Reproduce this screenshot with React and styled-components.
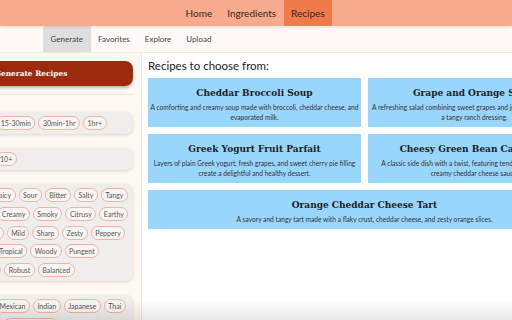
import React from "react";
import styled, { createGlobalStyle } from "styled-components";

const GlobalStyle = createGlobalStyle`
  *, *::before, *::after { box-sizing: border-box; }
  html, body { margin: 0; padding: 0; }
  body {
    width: 512px;
    height: 320px;
    overflow: hidden;
    background: #ffffff;
    font-family: Lato, "Open Sans", sans-serif;
  }
`;

const Page = styled.div`
  position: relative;
  width: 512px;
  height: 320px;
  overflow: hidden;
  display: flex;
  flex-direction: column;
`;

const NavBar = styled.nav`
  position: relative;
  z-index: 2;
  height: 26px;
  flex: none;
  display: flex;
  align-items: stretch;
  padding-left: 178px;
  background: #f7aa8d;
  box-shadow: 0 1px 3px rgba(0, 0, 0, 0.12);
`;

const NavItem = styled.a`
  display: flex;
  align-items: center;
  padding: 0 7.5px;
  font-size: 10px;
  color: #3b2620;
  background: ${({ $active }) => ($active ? "#ef7a4a" : "transparent")};
`;

const SubNav = styled.div`
  height: 27px;
  flex: none;
  display: flex;
  align-items: stretch;
  padding-left: 43px;
  background: #fdf9f4;
  border-bottom: 1px solid #f2eae2;
`;

const SubTab = styled.a`
  display: flex;
  align-items: center;
  padding: 0 7.5px;
  font-size: 8px;
  color: #444;
  background: ${({ $active }) => ($active ? "#dedede" : "transparent")};
`;

const Body = styled.div`
  flex: 1;
  display: flex;
  min-height: 0;
`;

const Sidebar = styled.aside`
  flex: none;
  width: 221px;
  margin-left: -79px;
  padding: 8px 8px 0 8px;
  background: #fdf8f1;
  border-right: 1px solid #efe5dc;
  display: flex;
  flex-direction: column;
`;

const GenerateButton = styled.button`
  height: 25px;
  flex: none;
  border: none;
  border-radius: 8px;
  background: #9c2b0c;
  color: #fff;
  font-family: "DejaVu Serif", serif;
  font-weight: bold;
  font-size: 7.4px;
  box-shadow: 0 2px 3px rgba(0, 0, 0, 0.25);
`;

const Filters = styled.div`
  margin-top: 8px;
  padding-top: 17px;
  border-top: 1px solid #f2e7dc;
  display: flex;
  flex-direction: column;
  gap: 14px;
`;

const FilterBox = styled.div`
  background: #efeeed;
  border-radius: 7px;
  padding: 4px 5px 4px;
  box-shadow: 0 1px 3px rgba(0, 0, 0, 0.14);
  display: flex;
  flex-direction: column;
  gap: 4.75px;
`;

const PillRow = styled.div`
  display: flex;
  gap: 3px;
  white-space: nowrap;
`;

const Pill = styled.span`
  height: 14px;
  display: inline-flex;
  align-items: center;
  padding: 0 3.5px;
  border: 1px solid #efb5a3;
  border-radius: 7px;
  background: #f8f5f3;
  font-size: 7px;
  color: #555;
`;

const Main = styled.main`
  flex: none;
  width: 450px;
  padding: 6px 0 0 6px;
  background: #fff;
`;

const Heading = styled.h2`
  margin: 0 0 5px;
  font-size: 11.5px;
  line-height: 14px;
  font-weight: normal;
  color: #222;
`;

const Grid = styled.div`
  display: grid;
  grid-template-columns: 213px 213px;
  gap: 7px;
`;

const Card = styled.div`
  grid-column: ${({ $wide }) => ($wide ? "1 / span 2" : "auto")};
  background: #99d6fd;
  padding: 7px 2px 5px;
  text-align: center;
`;

const CardTitle = styled.h3`
  margin: 0;
  font-family: "DejaVu Serif", serif;
  font-weight: bold;
  font-size: 9px;
  line-height: 16px;
  color: #1d1d1d;
`;

const CardText = styled.p`
  margin: 1px 0 0;
  font-size: 6.65px;
  line-height: 10px;
  color: #333;
`;

const BottomShade = styled.div`
  position: absolute;
  left: 0;
  right: 0;
  bottom: 0;
  height: 20px;
  background: linear-gradient(rgba(0, 0, 0, 0), rgba(0, 0, 0, 0.09));
  pointer-events: none;
`;

const filterBoxes = [
  [["Any", "0-15min", "15-30min", "30min-1hr", "1hr+"]],
  [["1", "2-4", "5-9", "10+"]],
  [
    ["Sweet", "Rich", "Spicy", "Sour", "Bitter", "Salty", "Tangy"],
    ["Nutty", "Umami", "Creamy", "Smoky", "Citrusy", "Earthy"],
    ["Herbaceous", "Tart", "Mild", "Sharp", "Zesty", "Peppery"],
    ["Sweet & Savory", "Tropical", "Woody", "Pungent"],
    ["Hearty", "Delicate", "Robust", "Balanced"],
  ],
  [
    ["Italian", "Greek", "Mexican", "Indian", "Japanese", "Thai"],
    ["Chinese", "French", "Mediterranean"],
  ],
];

const recipes = [
  {
    title: "Cheddar Broccoli Soup",
    text: "A comforting and creamy soup made with broccoli, cheddar cheese, and evaporated milk.",
  },
  {
    title: "Grape and Orange Salad",
    text: "A refreshing salad combining sweet grapes and juicy oranges, tossed in a tangy ranch dressing.",
  },
  {
    title: "Greek Yogurt Fruit Parfait",
    text: "Layers of plain Greek yogurt, fresh grapes, and sweet cherry pie filling create a delightful and healthy dessert.",
  },
  {
    title: "Cheesy Green Bean Casserole",
    text: "A classic side dish with a twist, featuring tender green beans in a creamy cheddar cheese sauce.",
  },
  {
    title: "Orange Cheddar Cheese Tart",
    text: "A savory and tangy tart made with a flaky crust, cheddar cheese, and zesty orange slices.",
    wide: true,
  },
];

export default function App() {
  return (
    <Page>
      <GlobalStyle />
      <NavBar>
        <NavItem>Home</NavItem>
        <NavItem>Ingredients</NavItem>
        <NavItem $active>Recipes</NavItem>
      </NavBar>
      <SubNav>
        <SubTab $active>Generate</SubTab>
        <SubTab>Favorites</SubTab>
        <SubTab>Explore</SubTab>
        <SubTab>Upload</SubTab>
      </SubNav>
      <Body>
        <Sidebar>
          <GenerateButton>Generate Recipes</GenerateButton>
          <Filters>
            {filterBoxes.map((rows, i) => (
              <FilterBox key={i}>
                {rows.map((row, j) => (
                  <PillRow key={j}>
                    {row.map((p) => (
                      <Pill key={p}>{p}</Pill>
                    ))}
                  </PillRow>
                ))}
              </FilterBox>
            ))}
          </Filters>
        </Sidebar>
        <Main>
          <Heading>Recipes to choose from:</Heading>
          <Grid>
            {recipes.map((r) => (
              <Card key={r.title} $wide={r.wide}>
                <CardTitle>{r.title}</CardTitle>
                <CardText>{r.text}</CardText>
              </Card>
            ))}
          </Grid>
        </Main>
      </Body>
      <BottomShade />
    </Page>
  );
}
